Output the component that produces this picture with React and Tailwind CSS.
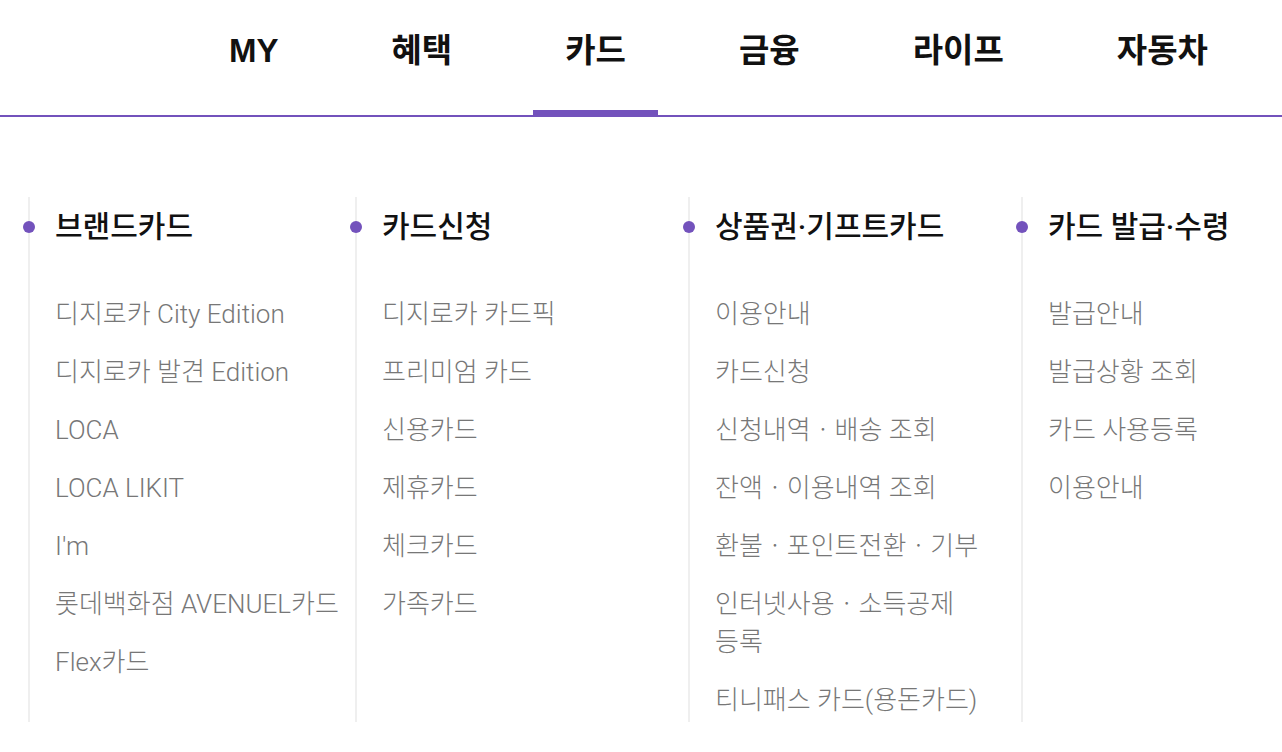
import React from "react";

const navItems = ["MY", "혜택", "카드", "금융", "라이프", "자동차"];

const columns = [
  {
    title: "브랜드카드",
    w: "w-[327px]",
    items: [
      "디지로카 City Edition",
      "디지로카 발견 Edition",
      "LOCA",
      "LOCA LIKIT",
      "I'm",
      "롯데백화점 AVENUEL카드",
      "Flex카드",
    ],
  },
  {
    title: "카드신청",
    w: "w-[333px]",
    items: ["디지로카 카드픽", "프리미엄 카드", "신용카드", "제휴카드", "체크카드", "가족카드"],
  },
  {
    title: "상품권·기프트카드",
    w: "w-[333px]",
    items: [
      "이용안내",
      "카드신청",
      "신청내역ㆍ배송 조회",
      "잔액ㆍ이용내역 조회",
      "환불ㆍ포인트전환ㆍ기부",
      "인터넷사용ㆍ소득공제\n등록",
      "티니패스 카드(용돈카드)",
    ],
  },
  {
    title: "카드 발급·수령",
    w: "w-[333px]",
    items: ["발급안내", "발급상황 조회", "카드 사용등록", "이용안내"],
  },
];

export default function App() {
  return (
    <div
      className="w-[1282px] h-[752px] overflow-hidden bg-white"
      style={{ fontFamily: 'Roboto, "Noto Sans CJK KR", sans-serif' }}
    >
      <nav className="h-[117px] border-b-2 border-[#7352bc] flex pl-[197px] gap-[49px]">
        {navItems.map((t, i) => (
          <div key={t} className="relative h-full px-8 pt-[30px]">
            <span
              className="block text-[33px] leading-[42px] font-bold text-[#111]"
              style={{ fontFamily: '"Liberation Sans", "Noto Sans CJK KR", sans-serif' }}
            >
              {t}
            </span>
            {i === 2 && (
              <div className="absolute left-0 right-0 bottom-0 h-[5px] bg-[#7352bc]" />
            )}
          </div>
        ))}
      </nav>

      <div className="mt-[80px] flex pl-[28px]">
        {columns.map((c) => (
          <div
            key={c.title}
            className={`relative shrink-0 ${c.w} h-[525px] border-l-2 border-[#efefef] pl-[25px] pt-[10px]`}
          >
            <span className="absolute left-[-7px] top-[24px] w-[12px] h-[12px] rounded-full bg-[#7352bc]" />
            <h3 className="text-[30px] leading-[40px] font-medium text-[#111]">{c.title}</h3>
            <ul className="mt-[48px] flex flex-col gap-[20px]">
              {c.items.map((it) => (
                <li
                  key={it}
                  className="text-[26px] leading-[38px] font-light text-[#777] whitespace-pre-line break-keep"
                >
                  {it}
                </li>
              ))}
            </ul>
          </div>
        ))}
      </div>
    </div>
  );
}
